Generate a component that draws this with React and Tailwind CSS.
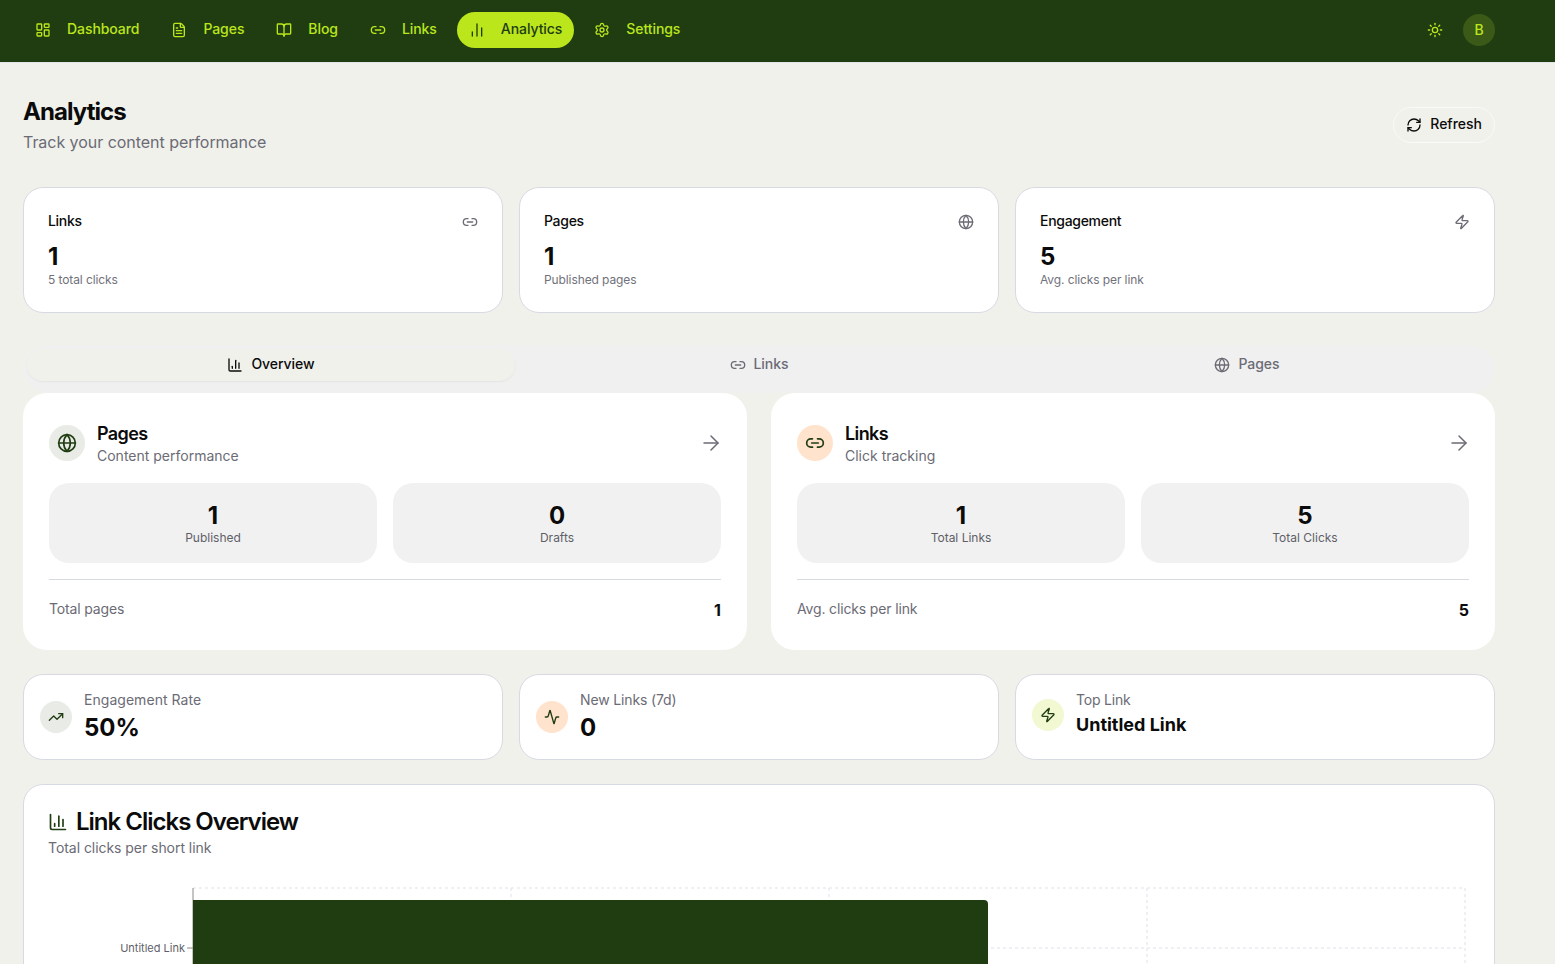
import React from "react";
import {
  LayoutDashboard,
  FileText,
  BookOpen,
  Link2,
  ChartNoAxesColumn,
  ChartColumn,
  Settings,
  Sun,
  RefreshCw,
  Globe,
  Zap,
  ArrowRight,
  TrendingUp,
  Activity,
} from "lucide-react";

const navItems = [
  { label: "Dashboard", icon: LayoutDashboard },
  { label: "Pages", icon: FileText },
  { label: "Blog", icon: BookOpen },
  { label: "Links", icon: Link2 },
  { label: "Analytics", icon: ChartNoAxesColumn, active: true },
  { label: "Settings", icon: Settings },
];

const statCards = [
  { title: "Links", value: "1", note: "5 total clicks", icon: Link2 },
  { title: "Pages", value: "1", note: "Published pages", icon: Globe },
  { title: "Engagement", value: "5", note: "Avg. clicks per link", icon: Zap },
];

const tabs = [
  { label: "Overview", icon: ChartColumn, active: true },
  { label: "Links", icon: Link2 },
  { label: "Pages", icon: Globe },
];

const Header = () => (
  <header className="h-[63px] shrink-0 bg-[#203d12] border-b border-[#e2e4e8] pl-[23px] pr-[60px] pb-[2px] flex items-center justify-between">
    <nav className="flex items-center gap-2">
      {navItems.map((item) => (
        <a
          key={item.label}
          className={`h-9 px-3 flex items-center gap-4 rounded-full text-sm font-medium tracking-[-0.07px] ${
            item.active ? "bg-[#bbe61c] text-[#203d12]" : "text-[#bbe61c]"
          }`}
        >
          <item.icon size={16} />
          <span className="-mt-[2px]">{item.label}</span>
        </a>
      ))}
    </nav>
    <div className="flex items-center gap-5">
      <Sun size={16} className="text-[#bbe61c]" />
      <div className="w-8 h-8 rounded-full bg-[#3b5a17] text-[#bbe61c] text-sm font-medium flex items-center justify-center">
        B
      </div>
    </div>
  </header>
);

const StatCard = ({ title, value, note, icon: Icon }) => (
  <div className="h-[126px] bg-white border border-[#d8dae3] rounded-[20px] px-6 pt-6">
    <div className="flex items-center justify-between h-5">
      <span className="-mt-[2px] text-sm font-medium tracking-[-0.3px] text-[#0b0b0b]">{title}</span>
      <Icon size={16} className="text-[#6b6b75]" />
    </div>
    <div className="mt-[9px] text-2xl leading-8 font-bold text-[#0b0b0b]">{value}</div>
    <div className="-mt-px text-xs leading-4 tracking-[-0.1px] text-[#71717a]">{note}</div>
  </div>
);

const MiniBox = ({ value, label }) => (
  <div className="h-20 bg-[#f1f1f1] rounded-[20px] flex flex-col items-center justify-center">
    <span className="text-2xl leading-8 font-bold text-[#0b0b0b]">{value}</span>
    <span className="-mt-[2px] text-xs leading-4 text-[#5f5f68]">{label}</span>
  </div>
);

const SectionCard = ({ title, subtitle, icon: Icon, iconBg, boxes, footLabel, footValue }) => (
  <div className="h-[257px] bg-white rounded-3xl px-[26px] pt-[26px]">
    <div className="flex items-center justify-between h-[48px]">
      <div className="flex items-center gap-3">
        <div className={`w-9 h-9 rounded-full flex items-center justify-center ${iconBg}`}>
          <Icon size={20} className="text-[#203d12]" />
        </div>
        <div className="h-12 pt-px">
          <div className="text-lg leading-7 font-semibold tracking-[-0.6px] text-[#0b0b0b]">{title}</div>
          <div className="text-sm leading-4 text-[#6b6b75]">{subtitle}</div>
        </div>
      </div>
      <ArrowRight size={24} strokeWidth={1.5} className="-mr-[2px] text-[#6b6b75]" />
    </div>
    <div className="mt-4 grid grid-cols-2 gap-4">
      {boxes.map((box) => (
        <MiniBox key={box.label} value={box.value} label={box.label} />
      ))}
    </div>
    <div className="mt-4 pt-[18px] border-t border-[#d8dae3] flex items-center justify-between">
      <span className="text-sm leading-5 tracking-[-0.15px] text-[#6b6b75]">{footLabel}</span>
      <span className="mt-[2px] text-base leading-5 font-bold text-[#0b0b0b]">{footValue}</span>
    </div>
  </div>
);

const SmallCard = ({ label, labelClass, value, icon: Icon, iconBg, valueClass }) => (
  <div className="bg-white border border-[#d8dae3] rounded-[20px] p-4">
    <div className="flex items-center gap-3">
      <div className={`w-8 h-8 rounded-full flex items-center justify-center ${iconBg}`}>
        <Icon size={16} className="text-[#203d12]" />
      </div>
      <div>
        <div className={`h-5 text-sm leading-[18px] text-[#6b6b75] ${labelClass}`}>{label}</div>
        <div className={`font-bold text-[#0b0b0b] ${valueClass}`}>{value}</div>
      </div>
    </div>
  </div>
);

const ClicksChart = () => (
  <svg width="1420" height="200" className="block mt-[29px]">
    <g stroke="#dfe1e8" strokeDasharray="3 3" fill="none">
      <path d="M145 1H1417V200" />
      <path d="M463 1V200M781 1V200M1099 1V200" />
      <path d="M145 61H1417" />
    </g>
    <path d="M145 1V200" stroke="#8a8a8a" />
    <path d="M139 61H145" stroke="#8a8a8a" />
    <text x="137" y="65" textAnchor="end" fontSize="11" fill="#5f5f68" fontFamily="Inter, sans-serif">
      Untitled Link
    </text>
    <path d="M145 13H936a4 4 0 0 1 4 4V200H145Z" fill="#203d12" />
  </svg>
);

export default function App() {
  return (
    <div className="h-screen overflow-hidden flex flex-col bg-[#f1f1ec] font-['Inter',sans-serif]">
      <Header />
      <main className="w-[1472px] ml-[23px]">
        <div className="mt-[33px] flex items-start justify-between">
          <div>
            <h1 className="text-2xl leading-8 font-bold tracking-[-0.95px] text-[#0b0b0b]">Analytics</h1>
            <p className="mt-[2px] text-base leading-6 tracking-[-0.04px] text-[#6b6b75]">Track your content performance</p>
          </div>
          <button className="mt-[11px] h-9 px-3 flex items-center gap-2 rounded-full border border-[#fafafa] text-sm font-medium text-[#0b0b0b]">
            <RefreshCw size={16} />
            <span className="-mt-[2px]">Refresh</span>
          </button>
        </div>

        <div className="mt-[33px] grid grid-cols-3 gap-4">
          {statCards.map((card) => (
            <StatCard key={card.title} {...card} />
          ))}
        </div>

        <div className="mt-8 h-12 bg-[#f0f0f0] rounded-full px-1 pt-1 grid grid-cols-3">
          {tabs.map((tab) => (
            <button
              key={tab.label}
              className={`h-8 flex items-center justify-center gap-2 rounded-full text-sm font-medium tracking-[-0.05px] ${
                tab.active ? "bg-[#f1f1ec] text-[#0b0b0b] shadow-xs" : "text-[#6b6b75]"
              }`}
            >
              <tab.icon size={16} />
              <span className="-mt-[2px]">{tab.label}</span>
            </button>
          ))}
        </div>

        <div className="grid grid-cols-2 gap-6">
          <SectionCard
            title="Pages"
            subtitle="Content performance"
            icon={Globe}
            iconBg="bg-[#e9ebe6]"
            boxes={[
              { value: "1", label: "Published" },
              { value: "0", label: "Drafts" },
            ]}
            footLabel="Total pages"
            footValue="1"
          />
          <SectionCard
            title="Links"
            subtitle="Click tracking"
            icon={Link2}
            iconBg="bg-[#ffe3cc]"
            boxes={[
              { value: "1", label: "Total Links" },
              { value: "5", label: "Total Clicks" },
            ]}
            footLabel="Avg. clicks per link"
            footValue="5"
          />
        </div>

        <div className="mt-6 grid grid-cols-3 gap-4">
          <SmallCard label="Engagement Rate" labelClass="tracking-[0.04px]" value="50%" icon={TrendingUp} iconBg="bg-[#e9ebe6]" valueClass="h-8 text-2xl leading-[34px]" />
          <SmallCard label="New Links (7d)" labelClass="tracking-[-0.15px]" value="0" icon={Activity} iconBg="bg-[#ffe3cc]" valueClass="h-8 text-2xl leading-[34px]" />
          <SmallCard label="Top Link" labelClass="tracking-[-0.2px]" value="Untitled Link" icon={Zap} iconBg="bg-[#f1f8d2]" valueClass="text-lg leading-7" />
        </div>

        <div className="mt-6 bg-white border border-[#d8dae3] rounded-[20px] px-6 pt-[23px] pb-6">
          <div className="flex items-center gap-2">
            <ChartColumn size={20} className="text-[#203d12]" />
            <h2 className="text-2xl leading-7 font-semibold tracking-[-1px] text-[#0b0b0b]">Link Clicks Overview</h2>
          </div>
          <p className="mt-[2px] text-sm leading-5 tracking-[-0.05px] text-[#6b6b75]">Total clicks per short link</p>
          <ClicksChart />
        </div>
      </main>
    </div>
  );
}
